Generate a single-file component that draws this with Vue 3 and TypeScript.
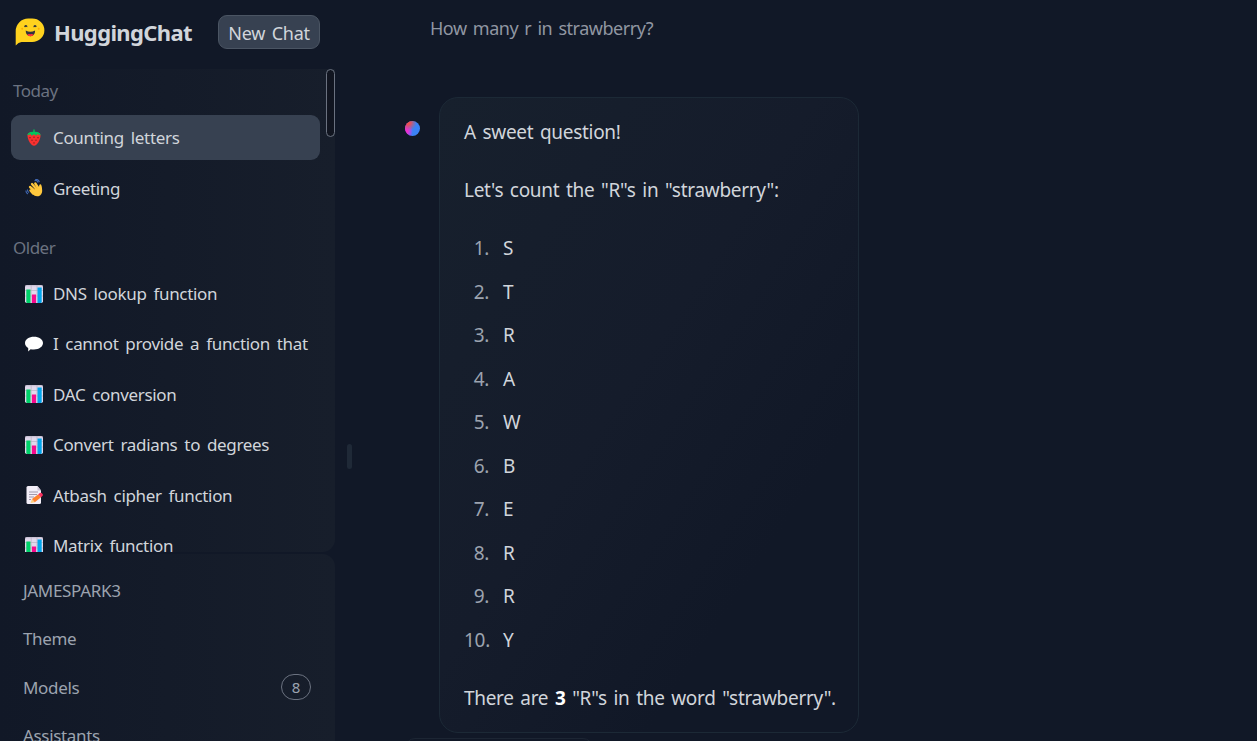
<script setup lang="ts">
type IconName = 'strawberry' | 'wave' | 'chart' | 'speech' | 'memo';

interface Conversation {
  title: string;
  icon: IconName;
  active?: boolean;
}

interface Group {
  label: string;
  items: Conversation[];
}

const groups: Group[] = [
  {
    label: 'Today',
    items: [
      { title: 'Counting letters', icon: 'strawberry', active: true },
      { title: 'Greeting', icon: 'wave' },
    ],
  },
  {
    label: 'Older',
    items: [
      { title: 'DNS lookup function', icon: 'chart' },
      { title: 'I cannot provide a function that', icon: 'speech' },
      { title: 'DAC conversion', icon: 'chart' },
      { title: 'Convert radians to degrees', icon: 'chart' },
      { title: 'Atbash cipher function', icon: 'memo' },
      { title: 'Matrix function', icon: 'chart' },
    ],
  },
];

const links: { label: string; count?: number }[] = [
  { label: 'JAMESPARK3' },
  { label: 'Theme' },
  { label: 'Models', count: 8 },
  { label: 'Assistants' },
];

const letters = 'STRAWBERRY'.split('');
</script>

<template>
  <div class="app">
    <aside class="sidebar">
      <header class="top">
        <svg class="logo" viewBox="0 0 30 28">
          <path d="M0.7 27.5V13A12.500 12.500 0 0 1 13.200 0.500h4A12.200 11.700 0 0 1 17.200 23.900H6.500Q3.500 24 0.700 27.500z" fill="#ffd21e" />
          <path d="M9 9.200q.4-2.300 1.900-2.100 1.500.1 1.600 2.200-.9-.8-1.600-.1-.7-.7-1.900 0zM18.300 9.300q.2-2.200 1.700-2.200 1.500 0 1.800 2-.9-.6-1.600.2-.7-.8-1.900 0z" fill="#32343d" />
          <circle cx="7.200" cy="10.800" r="1" fill="#ffad03" />
          <circle cx="23.700" cy="10.800" r="1" fill="#ffad03" />
          <path d="M10.700 12.600q4.700 2.400 9.400 0 0 5.400-4.700 5.600-4.700-.2-4.700-5.600z" fill="#32343d" />
          <path d="M12.200 16.800q1.500-1.500 3.200-.5 1.700-1 3.200.5-1.300 1.500-3.200 1.500t-3.200-1.500z" fill="#ff323d" />
        </svg>
        <h1 class="brand">HuggingChat</h1>
        <button class="new-chat">New Chat</button>
      </header>

      <nav class="history">
        <section v-for="group in groups" :key="group.label" class="group">
          <h4>{{ group.label }}</h4>
          <a v-for="item in group.items" :key="item.title" class="item" :class="{ active: item.active }">
            <svg class="icon" viewBox="0 0 18 18">
              <template v-if="item.icon === 'strawberry'">
                <path d="M2.500 6.500C2.500 3.500 6 3 9 3s6.500.5 6.500 3.500c0 4-3.300 10.300-6.500 10.300S2.500 10.500 2.500 6.500z" fill="#f8312f" />
                <path d="M2.300 6.200Q3 2.500 8.300 2.700V.5h1.400v2.200q5.300-.2 6 3.500-2.200 0-3.200-1.100L11.300 6.700 9 5.300 6.700 6.700 5.500 5.100Q4.500 6.200 2.300 6.200z" fill="#00c45c" />
                <path d="M5 8v1.300M9 7.600v1.300M13 8v1.300M7 10.600v1.300M11 10.600v1.300M9 13.300v1.300" stroke="#6d1b21" stroke-width="1" />
              </template>
              <template v-else-if="item.icon === 'wave'">
                <path d="M9.500 1.800q2.600-1.200 3.600 1.800M10.200 .5q3.500-.5 4.200 2.600M1 11.500q-.3 2.500 2 3.500M2.500 10.500q-.2 2 1.500 3" fill="none" stroke="#4169b5" stroke-width="1.100" />
                <path d="M5.500 11.500 8 14.500M5 8l6 5M7 5l6 7M10.300 4.500l4 6" stroke="#ffc83d" stroke-width="2.300" stroke-linecap="round" />
                <path d="M6 11 14 8.500Q14 5 15.500 5.300 17 5.800 17.200 12 17 16 13.500 17.200 10 18 7.500 15z" fill="#ffc83d" />
                <path d="M7.500 8.500l2.500 2.500M9.500 6.500l2.600 3" stroke="#d99a2b" stroke-width=".5" />
              </template>
              <template v-else-if="item.icon === 'chart'">
                <rect width="18" height="18" rx="1.800" fill="#e1d8ec" />
                <path d="M0 5.500h18M0 11h18M6.200 0v18M12 0v18M.3.700h17.400" stroke="#b4acbc" stroke-width=".6" />
                <path d="M1.300 4.500h4.200V18h-3.200Q1.300 18 1.300 17z" fill="#00d26a" />
                <path d="M7 9.500h4V18H7z" fill="#f70a8d" />
                <path d="M12.500 2.500h4.200V17q0 1-1 1h-3.200z" fill="#00a6ed" />
              </template>
              <template v-else-if="item.icon === 'speech'">
                <path d="M9 1.800c5 0 9 2.700 9 6.300s-4 6.500-9 6.500q-2 0-3.400-.4L3.200 16.500V13Q0 11.200 0 8.100C0 4.500 4 1.800 9 1.800z" fill="#fff" />
              </template>
              <template v-else>
                <path d="M3 0h9.500L16 4.500V16.500q0 1.500-1.500 1.500H3q-1.500 0-1.500-1.500v-15Q1.500 0 3 0z" fill="#f3eef8" />
                <path d="M12.500 0v4.500H16z" fill="#cdc4d6" />
                <path d="M4 6h9M4 8.500h8M4 11h5M4 13.500h2" stroke="#998ea4" stroke-width=".9" />
                <path d="M5.500 17l1.500-4 2.800 3.200z" fill="#ffce7c" />
                <path d="M7 13l6.300-4.800 2.500 3.200-6 4.800z" fill="#ff822d" />
                <path d="M13.300 8.200l1.600-1.300q1-.6 1.800.2l1 1.200q.5 1-.4 1.800l-1.500 1.300z" fill="#f8315f" />
              </template>
            </svg>
            <span>{{ item.title }}</span>
          </a>
        </section>
        <div class="scroll-thumb"></div>
      </nav>

      <nav class="links">
        <a v-for="link in links" :key="link.label">
          <span>{{ link.label }}</span>
          <span v-if="link.count" class="count">{{ link.count }}</span>
        </a>
      </nav>
    </aside>

    <div class="gutter"><span></span></div>

    <main class="chat">
      <p class="prompt">How many r in strawberry?</p>
      <div class="reply">
        <svg class="avatar" viewBox="0 0 15 15">
          <defs>
            <linearGradient id="avatar-blue" x1="0" x2="1">
              <stop offset=".1" stop-color="#a43af0" />
              <stop offset=".5" stop-color="#3b82f6" />
            </linearGradient>
            <radialGradient id="avatar-red" cx=".22" cy=".1" r=".55">
              <stop offset=".2" stop-color="#f0504a" />
              <stop offset="1" stop-color="#f0504a" stop-opacity="0" />
            </radialGradient>
            <radialGradient id="avatar-pink" cx=".08" cy=".68" r=".45">
              <stop offset=".2" stop-color="#f02fd0" />
              <stop offset="1" stop-color="#d946ef" stop-opacity="0" />
            </radialGradient>
          </defs>
          <circle cx="7.500" cy="7.500" r="7.500" fill="url(#avatar-blue)" />
          <circle cx="7.500" cy="7.500" r="7.500" fill="url(#avatar-pink)" />
          <circle cx="7.500" cy="7.500" r="7.500" fill="url(#avatar-red)" />
        </svg>
        <article class="bubble">
          <p>A sweet question!</p>
          <p>Let's count the "R"s in "strawberry":</p>
          <ol>
            <li v-for="(letter, index) in letters" :key="index">
              <span class="marker">{{ index + 1 }}.</span>
              <span>{{ letter }}</span>
            </li>
          </ol>
          <p>There are <strong>3</strong> "R"s in the word "strawberry".</p>
        </article>
      </div>
      <div class="next-box"></div>
    </main>
  </div>
</template>

<style>
body {
  background: #111827;
  overflow: hidden;
}
</style>

<style scoped>
.app {
  display: flex;
  height: 100vh;
  overflow: hidden;
  background: #111827;
  color: #d1d5db;
  font-family: "Noto Sans", "Open Sans", sans-serif;
  font-size: 17px;
  letter-spacing: -0.33px;
  word-spacing: 2.8px;
}

h1,
h4,
p,
ol {
  margin: 0;
  padding: 0;
  font-weight: 400;
}

.sidebar {
  display: flex;
  flex: none;
  flex-direction: column;
  width: 335px;
}

.top {
  display: flex;
  flex: none;
  align-items: center;
  box-sizing: border-box;
  height: 69px;
  padding: 0 15px 5px;
}

.logo {
  flex: none;
  width: 30px;
  height: 28px;
}

.brand {
  margin: 0 0 0 9px;
  font-size: 22px;
  font-weight: 700;
  letter-spacing: -0.63px;
  white-space: nowrap;
}

.new-chat {
  box-sizing: border-box;
  width: 102px;
  height: 34px;
  margin-left: auto;
  padding: 2px 0 0;
  border: 1px solid #4b5563;
  border-radius: 9px;
  background: #374151;
  color: #d1d5db;
  font: inherit;
  font-size: 18px;
  letter-spacing: -0.3px;
  word-spacing: 2.4px;
  white-space: nowrap;
}

.history {
  position: relative;
  flex: none;
  box-sizing: border-box;
  height: 483px;
  padding: 0 15px 0 11px;
  overflow: hidden;
  border-radius: 0 0 13px 0;
  background: linear-gradient(to right, #111827, #171e2b);
}

.group h4 {
  height: 46.3px;
  padding-left: 2px;
  color: #6b7280;
  font-size: 17px;
  letter-spacing: -0.5px;
  line-height: 43px;
}

.group + .group h4 {
  height: 55px;
  line-height: 63px;
}

.item {
  display: flex;
  align-items: center;
  box-sizing: border-box;
  height: 45px;
  margin-bottom: 5.4px;
  padding-left: 14px;
  border-radius: 9px;
  line-height: 45px;
  white-space: nowrap;
}

.active {
  background: #374151;
}

.icon {
  flex: none;
  width: 18px;
  height: 18px;
  margin-right: 10px;
}

.scroll-thumb {
  position: absolute;
  top: 0;
  right: 0;
  box-sizing: border-box;
  width: 9px;
  height: 68px;
  border: 1px solid #6b7280;
  border-radius: 5px;
  background: #111520;
}

.links {
  flex: none;
  box-sizing: border-box;
  height: 200px;
  margin-top: 2px;
  padding: 12.2px 24px 0 23px;
  border-radius: 0 13px 0 0;
  background: linear-gradient(to right, #111827, #171e2b);
  color: #9ca3af;
}

.links a {
  display: flex;
  align-items: center;
  justify-content: space-between;
  height: 48.4px;
}

.count {
  box-sizing: border-box;
  width: 30px;
  height: 26px;
  border: 1px solid #6b7280;
  border-radius: 13px;
  font-size: 15px;
  line-height: 25px;
  text-align: center;
}

.gutter {
  display: flex;
  flex: none;
  width: 70px;
  padding-top: 444px;
}

.gutter span {
  width: 5px;
  height: 25px;
  margin-left: 12px;
  border-radius: 3px;
  background: #1f2937;
}

.chat {
  flex: 1;
  font-size: 19px;
  letter-spacing: -0.3px;
  word-spacing: 2px;
}

.prompt {
  height: 97px;
  padding-left: 25px;
  color: #9096a2;
  font-size: 18px;
  letter-spacing: -0.48px;
  line-height: 56px;
}

.reply {
  display: flex;
  align-items: flex-start;
}

.avatar {
  width: 15px;
  height: 15px;
  margin: 24px 19px 0 0;
}

.bubble {
  box-sizing: border-box;
  width: 420px;
  height: 636px;
  padding: 17px 24px;
  border: 1px solid #1c2936;
  border-radius: 19px;
  background: linear-gradient(to bottom right, #17202d, #151c2b 45%, #111827 75%);
  line-height: 34px;
  white-space: nowrap;
}

.bubble p {
  margin-bottom: 24px;
}

.bubble ol {
  margin-bottom: 24px;
  list-style: none;
}

.bubble li {
  display: flex;
  height: 43.5px;
}

.bubble li:last-child {
  height: 34px;
}

.marker {
  width: 25px;
  margin-right: 14px;
  color: #9ca3af;
  text-align: right;
}

strong {
  color: #fff;
}

.next-box {
  box-sizing: border-box;
  width: 188px;
  height: 40px;
  margin-top: 5px;
  border: 1px solid #1c2533;
  border-radius: 10px;
}
</style>
